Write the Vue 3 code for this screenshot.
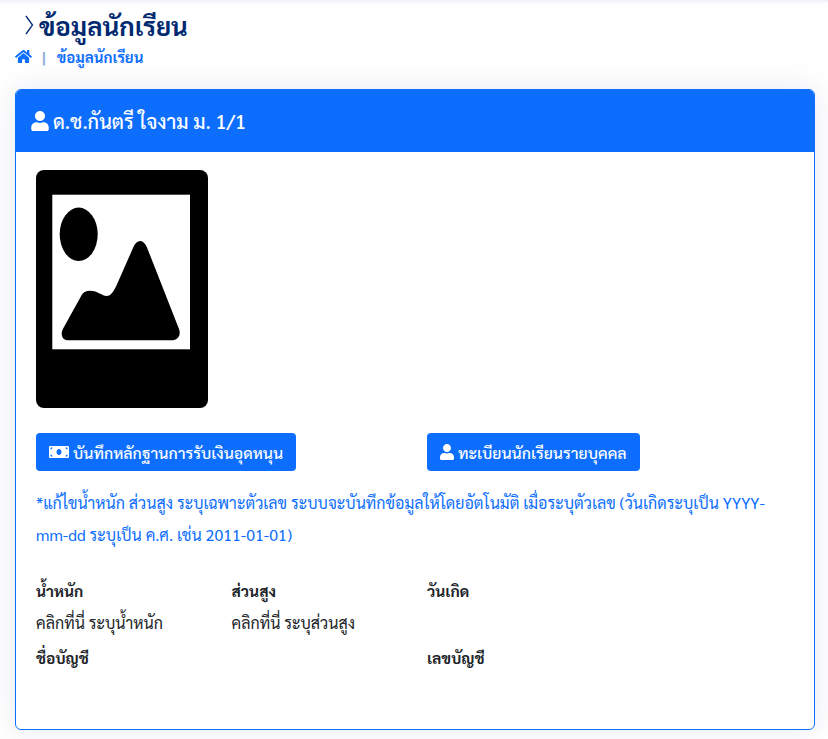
<template>
  <main class="page">
    <div class="pagetitle">
      <h1>
        <svg class="chevron" viewBox="0 0 9 20" width="9" height="20"><path d="M1 1 7.500 10 1 19" fill="none" stroke="currentColor" stroke-width="1.300" /></svg>
        ข้อมูลนักเรียน
      </h1>
      <nav class="breadcrumb">
        <svg class="home" viewBox="0 0 576 512" width="17" height="15"><path fill="currentColor" d="M280.400 148.300 96 300.100V464a16 16 0 0 0 16 16l112-.3a16 16 0 0 0 15.900-16V368a16 16 0 0 1 16-16h64a16 16 0 0 1 16 16v95.600a16 16 0 0 0 16 16.100l112 .3a16 16 0 0 0 16-16V300L295.700 148.300a12.200 12.200 0 0 0-15.300 0zM571.600 251.500 488 182.600V44.100a12 12 0 0 0-12-12h-56a12 12 0 0 0-12 12v72.600L318.500 43a48 48 0 0 0-61 0L4.300 251.500a12 12 0 0 0-1.600 16.900l25.500 31A12 12 0 0 0 45.200 301l235.200-193.700a12.200 12.200 0 0 1 15.300 0L530.900 301a12 12 0 0 0 16.900-1.600l25.500-31a12 12 0 0 0-1.700-16.900z" /></svg>
        <span class="sep">|</span>
        <span class="crumb">ข้อมูลนักเรียน</span>
      </nav>
    </div>

    <section class="card">
      <header class="card-head">
        <svg viewBox="0 0 448 512" width="18" height="20"><path fill="currentColor" :d="userPath" /></svg>
        ด.ช.กันตรี ใจงาม ม. 1/1
      </header>
      <div class="card-body">
        <svg class="photo" viewBox="0 0 172 238" width="172" height="238">
          <rect width="172" height="238" rx="8" fill="#000" />
          <rect x="16.300" y="24.700" width="137.700" height="154.600" fill="#fff" />
          <ellipse cx="42.700" cy="64.300" rx="19" ry="26.700" fill="#000" />
          <path fill="#000" d="M32.300 170.300H135.700C141 170.300 145.500 166 143 159L110.700 76.700C107 69 101 69 97.300 77.300L80.700 115C77 123 74 126 70.700 126C66 126 62 120.700 54 120.700C50 120.700 47 122.500 45.700 125L27.300 158.300C24 164 26 170.300 32.300 170.300Z" />
        </svg>

        <div class="actions">
          <div>
            <a class="btn">
              <svg viewBox="0 0 640 512" width="20" height="16"><path fill="currentColor" d="M608 64H32C14.330 64 0 78.330 0 96v320c0 17.670 14.330 32 32 32h576c17.670 0 32-14.330 32-32V96c0-17.670-14.330-32-32-32zM48 400v-64c35.350 0 64 28.650 64 64H48zm0-224v-64h64c0 35.350-28.650 64-64 64zm272 176c-44.190 0-80-42.990-80-96 0-53.020 35.820-96 80-96s80 42.980 80 96c0 53.030-35.830 96-80 96zm272 48h-64c0-35.350 28.650-64 64-64v64zm0-224c-35.350 0-64-28.650-64-64h64v64z" /></svg>
              บันทึกหลักฐานการรับเงินอุดหนุน
            </a>
          </div>
          <div>
            <a class="btn">
              <svg viewBox="0 0 448 512" width="14" height="16"><path fill="currentColor" :d="userPath" /></svg>
              ทะเบียนนักเรียนรายบุคคล
            </a>
          </div>
        </div>

        <p class="note">*แก้ไขน้ำหนัก ส่วนสูง ระบุเฉพาะตัวเลข ระบบจะบันทึกข้อมูลให้โดยอัตโนมัติ เมื่อระบุตัวเลข (วันเกิดระบุเป็น YYYY-mm-dd ระบุเป็น ค.ศ. เช่น 2011-01-01)</p>

        <div class="fields">
          <div v-for="f in fields" :key="f.label" class="field" :class="f.cls">
            <b>{{ f.label }}</b>
            <span v-if="f.value">{{ f.value }}</span>
          </div>
        </div>
      </div>
    </section>
  </main>
</template>

<script setup>
const userPath = 'M224 256c70.700 0 128-57.300 128-128S294.700 0 224 0 96 57.300 96 128s57.300 128 128 128zm89.600 32h-16.700c-22.200 10.200-46.900 16-72.900 16s-50.600-5.800-72.900-16h-16.700C60.200 288 0 348.200 0 422.400V464c0 26.500 21.500 48 48 48h352c26.500 0 48-21.500 48-48v-41.600c0-74.200-60.200-134.400-134.400-134.400z'

const fields = [
  { label: 'น้ำหนัก', value: 'คลิกที่นี่ ระบุน้ำหนัก' },
  { label: 'ส่วนสูง', value: 'คลิกที่นี่ ระบุส่วนสูง' },
  { label: 'วันเกิด', value: '', cls: 'half' },
  { label: 'ชื่อบัญชี', value: '', cls: 'half' },
  { label: 'เลขบัญชี', value: '', cls: 'half' },
]
</script>

<style>
body {
  background: #fff;
}
</style>

<style scoped>
.page {
  height: 739px;
  overflow: hidden;
  box-sizing: border-box;
  padding: 0 13px 0 15px;
  font-family: Sarabun, "Noto Sans", sans-serif;
  font-size: 16px;
  color: #212529;
  box-shadow: inset 0 5px 5px -5px rgba(1, 41, 112, 0.15);
}

.pagetitle {
  padding-top: 10px;
  height: 89px;
  box-sizing: border-box;
}

h1 {
  margin: 0;
  font-size: 25.800px;
  line-height: 30px;
  font-weight: 700;
  color: #012970;
  display: flex;
  align-items: center;
  gap: 5px;
  padding-left: 10px;
}

.breadcrumb {
  display: flex;
  align-items: center;
  margin-top: 4px;
  height: 24px;
  font-size: 15px;
  font-weight: 700;
  color: #0d6efd;
}

.sep {
  margin: 0 11px 0 10px;
  color: #8fb0dc;
}

.card {
  background: #fff;
  border: 1px solid #0d6efd;
  border-radius: 6px;
  height: 641px;
  box-sizing: border-box;
  overflow: hidden;
  box-shadow: 0 0 30px rgba(1, 41, 112, 0.1);
}

.card-head {
  height: 62px;
  background: #0d6efd;
  color: #fff;
  display: flex;
  align-items: center;
  gap: 4px;
  padding-left: 15px;
  font-size: 19.800px;
  font-weight: 500;
}

.card-body {
  padding: 18px 20px;
}

.photo {
  display: block;
}

.actions {
  display: grid;
  grid-template-columns: 391px 1fr;
  margin-top: 25px;
}

.btn {
  display: inline-flex;
  align-items: center;
  gap: 4px;
  height: 38px;
  padding: 0 13px;
  box-sizing: border-box;
  background: #0d6efd;
  color: #fff;
  border-radius: 4px;
  font-weight: 500;
  font-size: 15.850px;
}

.note {
  margin: 16px 0 0;
  color: #0d6efd;
  line-height: 32px;
  font-size: 16px;
}

.fields {
  display: grid;
  grid-template-columns: 195.500px 195.500px 1fr 1fr;
  margin-top: 28px;
}

.field {
  display: flex;
  flex-direction: column;
  min-height: 67px;
}

.field b {
  font-weight: 700;
  font-size: 15.500px;
  line-height: 24px;
  margin-bottom: 8px;
}

.field span {
  line-height: 24px;
}

.half {
  grid-column: span 2;
}
</style>
